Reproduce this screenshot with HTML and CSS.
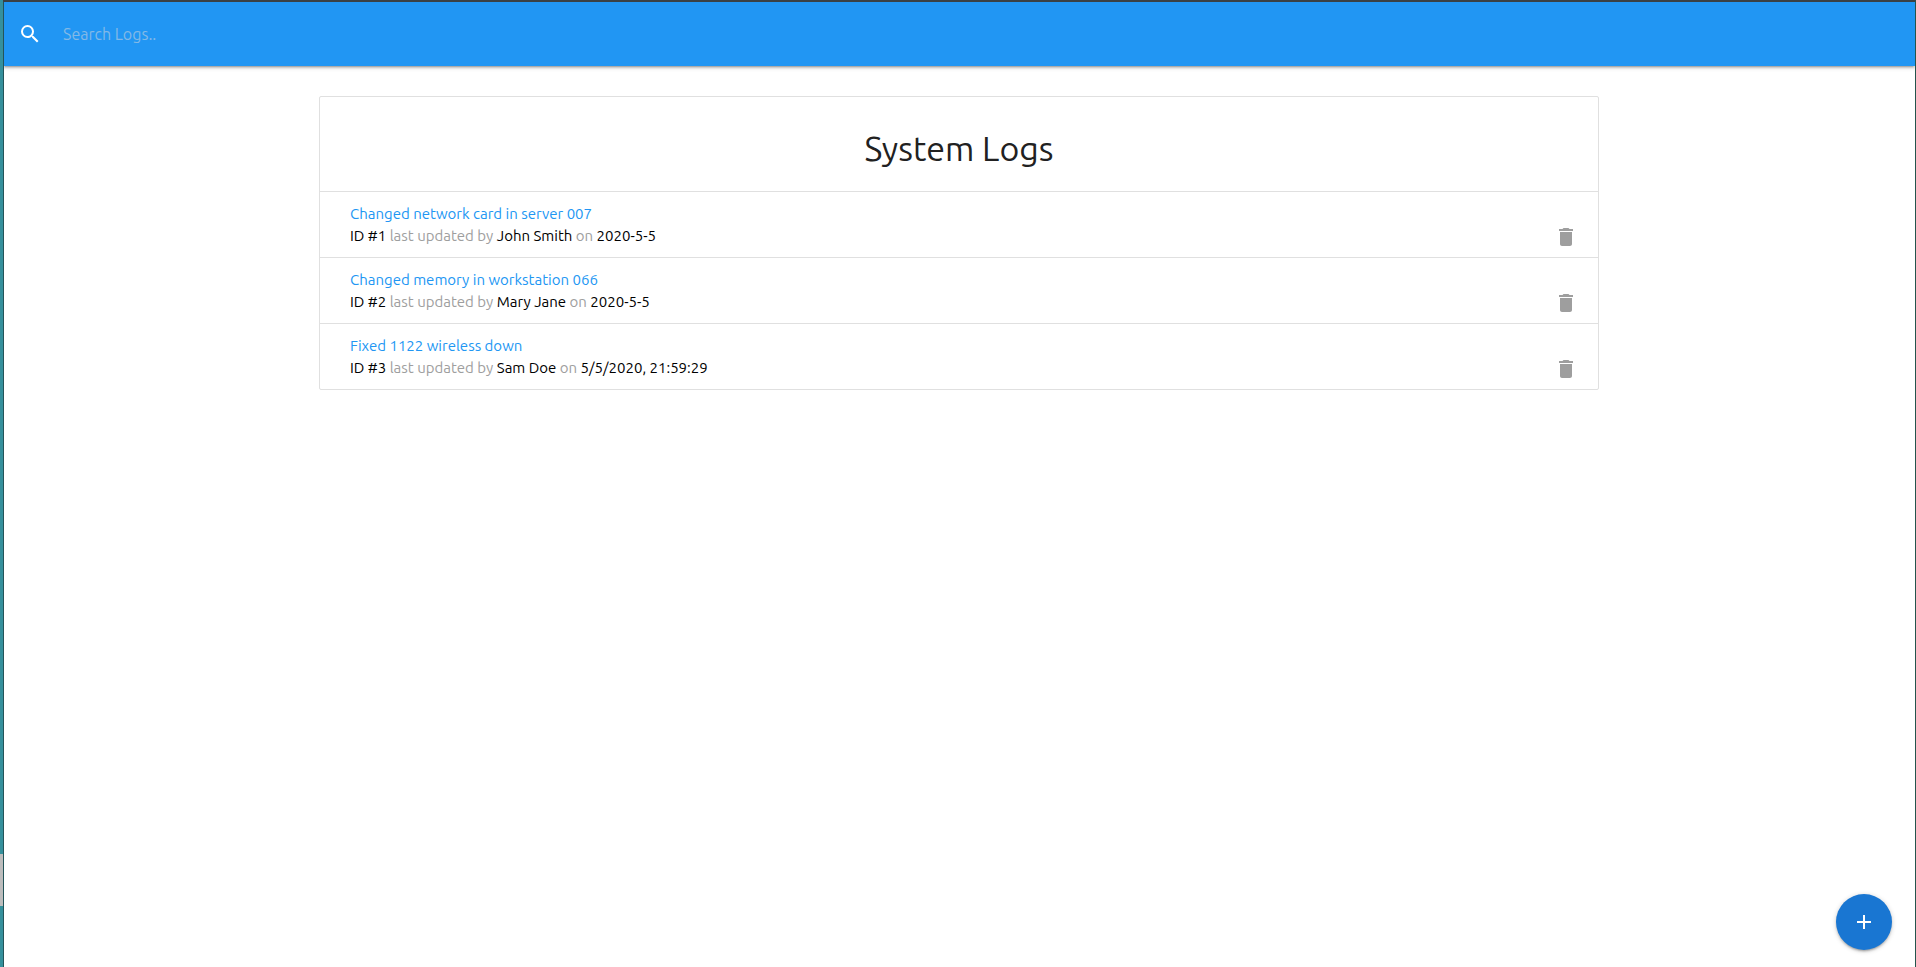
FILE: index.html
```html
<!DOCTYPE html>
<html lang="en">
<head>
<meta charset="utf-8">
<meta name="viewport" content="width=device-width, initial-scale=1">
<title>System Logs</title>
<link rel="stylesheet" href="styles.css">
</head>
<body>
<div class="window">
  <nav class="navbar">
    <form class="search" role="search">
      <label class="search-label" for="search" aria-label="Search logs">
        <svg class="icon icon-light" viewBox="0 0 24 24" aria-hidden="true"><path d="M15.5 14h-.79l-.28-.27A6.471 6.471 0 0 0 16 9.500 6.500 6.500 0 1 0 9.500 16c1.610 0 3.090-.59 4.230-1.570l.27.28v.79l5 4.990L20.490 19l-4.990-5zm-6 0C7.010 14 5 11.990 5 9.500S7.010 5 9.500 5 14 7.010 14 9.500 11.990 14 9.500 14z"/></svg>
      </label>
      <input class="search-input" id="search" type="search" placeholder="Search Logs..">
    </form>
  </nav>
  <main class="container">
    <ul class="collection">
      <li class="collection-header"><h4 class="title">System Logs</h4></li>
      <li class="log">
        <div class="log-text">
          <a class="log-message" href="#log-1" id="log-1">Changed network card in server 007</a>
          <p class="log-meta"><span class="strong">ID #1</span> last updated by <span class="strong">John Smith</span> on <span class="strong">2020-5-5</span></p>
        </div>
        <button class="delete" type="button" aria-label="Delete log 1"><svg class="icon icon-grey" viewBox="0 0 24 24" aria-hidden="true"><path d="M6 19c0 1.100.9 2 2 2h8c1.100 0 2-.9 2-2V7H6v12zM19 4h-3.500l-1-1h-5l-1 1H5v2h14V4z"/></svg></button>
      </li>
      <li class="log">
        <div class="log-text">
          <a class="log-message" href="#log-2" id="log-2">Changed memory in workstation 066</a>
          <p class="log-meta"><span class="strong">ID #2</span> last updated by <span class="strong">Mary Jane</span> on <span class="strong">2020-5-5</span></p>
        </div>
        <button class="delete" type="button" aria-label="Delete log 2"><svg class="icon icon-grey" viewBox="0 0 24 24" aria-hidden="true"><path d="M6 19c0 1.100.9 2 2 2h8c1.100 0 2-.9 2-2V7H6v12zM19 4h-3.500l-1-1h-5l-1 1H5v2h14V4z"/></svg></button>
      </li>
      <li class="log">
        <div class="log-text">
          <a class="log-message" href="#log-3" id="log-3">Fixed 1122 wireless down</a>
          <p class="log-meta"><span class="strong">ID #3</span> last updated by <span class="strong">Sam Doe</span> on <span class="strong">5/5/2020, 21:59:29</span></p>
        </div>
        <button class="delete" type="button" aria-label="Delete log 3"><svg class="icon icon-grey" viewBox="0 0 24 24" aria-hidden="true"><path d="M6 19c0 1.100.9 2 2 2h8c1.100 0 2-.9 2-2V7H6v12zM19 4h-3.500l-1-1h-5l-1 1H5v2h14V4z"/></svg></button>
      </li>
    </ul>
  </main>
  <button class="fab" type="button" aria-label="Add log"><svg class="icon icon-light" viewBox="0 0 24 24" aria-hidden="true"><path d="M19 13h-6v6h-2v-6H5v-2h6V5h2v6h6v2z"/></svg></button>
</div>
</body>
</html>
```
FILE: styles.css
```css
* {
  box-sizing: border-box;
}

body {
  margin: 0;
  font-family: Ubuntu, "Noto Sans", "Open Sans", sans-serif;
  font-size: 15px;
  font-weight: 430;
  line-height: 22px;
  color: #000;
  background: #fff;
}

/* Desktop edge showing around the browser window */
.window {
  position: relative;
  min-height: 100vh;
  padding: 2px 1px 0 3px;
}

.window::before {
  content: "";
  position: absolute;
  top: 0;
  bottom: 0;
  left: 0;
  width: 3px;
  border-right: 1px solid #245459;
  background: linear-gradient(#35909c 0 854px, #bdbdbd 854px 906px, #35909c 906px);
}

.window::after {
  content: "";
  position: absolute;
  top: 0;
  right: 0;
  bottom: 0;
  left: 3px;
  border-top: 2px solid #3a4044;
  border-right: 1px solid #24544c;
  pointer-events: none;
}

.navbar {
  height: 64px;
  background: #2196f3;
  box-shadow: 0 2px 2px 0 rgba(0, 0, 0, 0.14), 0 3px 1px -2px rgba(0, 0, 0, 0.12), 0 1px 5px 0 rgba(0, 0, 0, 0.2);
}

.search {
  display: flex;
  align-items: center;
  gap: 21px;
  height: 100%;
  padding-left: 15px;
}

.search-label {
  display: flex;
}

.search-input {
  flex: 1;
  min-width: 0;
  height: 100%;
  padding: 0;
  border: 0;
  outline: 0;
  background: transparent;
  color: #fff;
  font: inherit;
  font-size: 16px;
}

.search-input::placeholder {
  color: #83b9e6;
  opacity: 1;
}

.icon {
  display: block;
  width: 24px;
  height: 24px;
}

.icon-light {
  fill: #fff;
}

.icon-grey {
  fill: #9e9e9e;
}

.container {
  max-width: 1280px;
  margin: 0 auto;
  padding-top: 30px;
}

.collection {
  margin: 0;
  padding: 0;
  list-style: none;
  border: 1px solid #e0e0e0;
  border-radius: 2px;
}

.collection-header {
  padding: 30px 20px 22px;
}

.title {
  margin: 0;
  font-size: 34px;
  font-weight: 430;
  line-height: 42px;
  text-align: center;
  color: #212121;
}

.log {
  display: flex;
  align-items: flex-end;
  justify-content: space-between;
  padding: 11px 20px 10px 30px;
  border-top: 1px solid #e0e0e0;
}

.log-message {
  color: #2196f3;
  text-decoration: none;
}

.log-meta {
  margin: 0;
  color: #9e9e9e;
}

.strong {
  color: #000;
}

.delete {
  flex: none;
  height: 22px;
  padding: 0;
  border: 0;
  background: transparent;
  cursor: pointer;
}

.fab {
  position: fixed;
  right: 24px;
  bottom: 17px;
  display: grid;
  place-items: center;
  width: 56px;
  height: 56px;
  padding: 0;
  border: 0;
  border-radius: 50%;
  background: #1976d2;
  box-shadow: 0 2px 2px 0 rgba(0, 0, 0, 0.14), 0 3px 1px -2px rgba(0, 0, 0, 0.12), 0 1px 5px 0 rgba(0, 0, 0, 0.2);
  cursor: pointer;
}
```
